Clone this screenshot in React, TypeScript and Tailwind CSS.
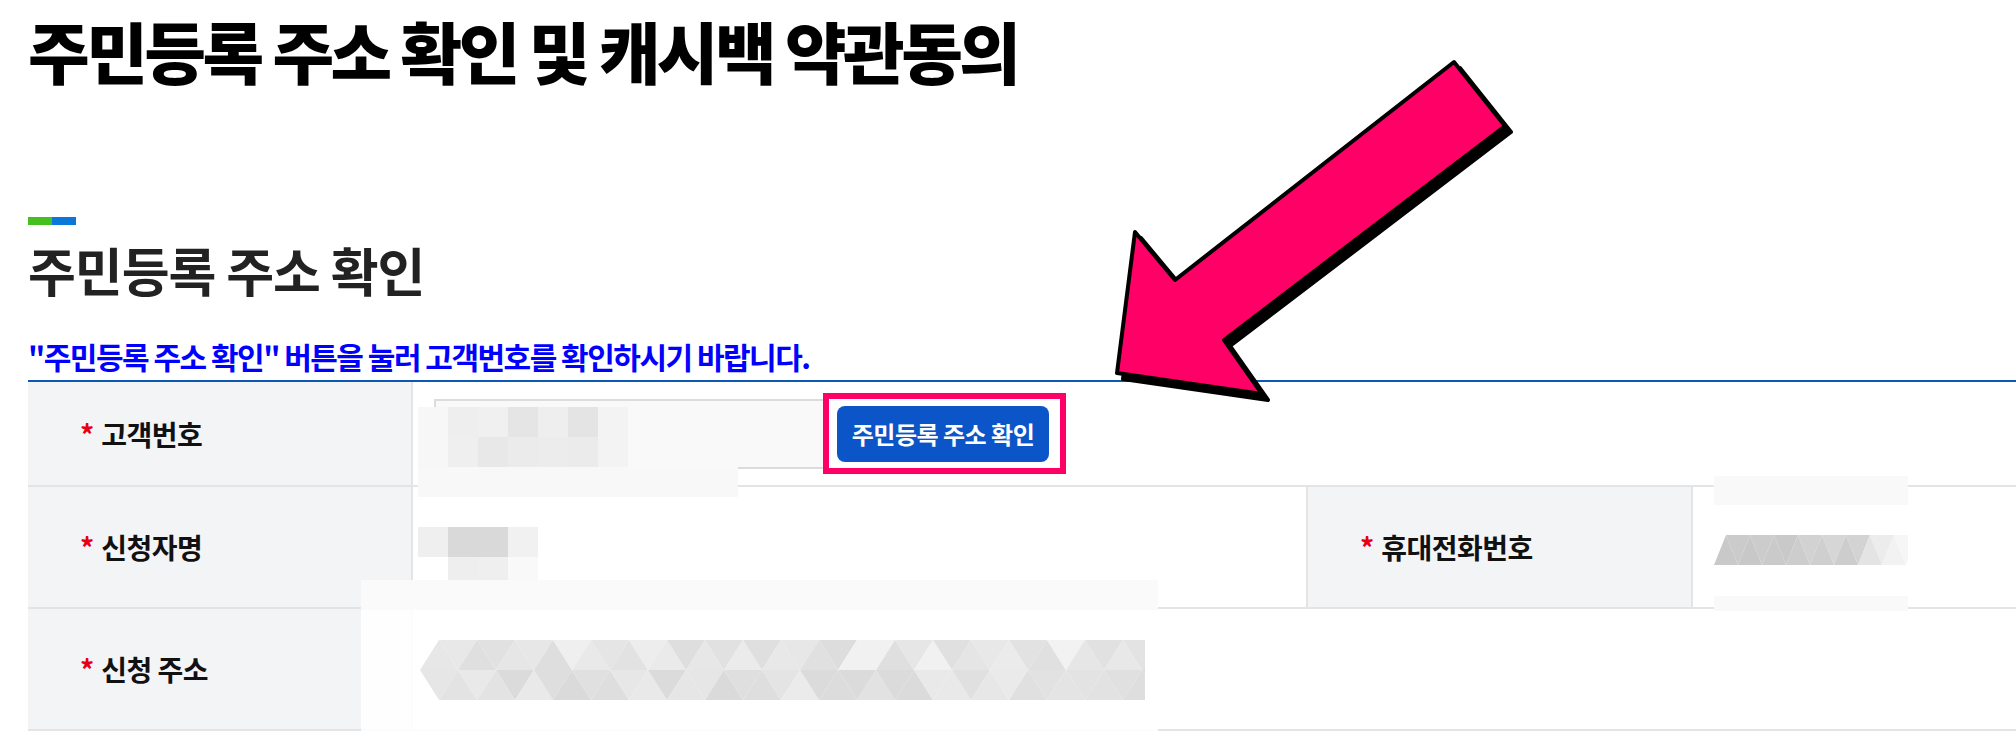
import React from "react";

type Cell = string;

function Mosaic({
  left,
  top,
  cw,
  rows,
  heights,
}: {
  left: number;
  top: number;
  cw: number;
  rows: Cell[][];
  heights: number[];
}) {
  return (
    <div className="absolute flex flex-col" style={{ left, top }}>
      {rows.map((r, i) => (
        <div key={i} className="flex" style={{ height: heights[i] }}>
          {r.map((c, j) => (
            <div key={j} style={{ width: cw, backgroundColor: c }} />
          ))}
        </div>
      ))}
    </div>
  );
}

function TriBand({
  width,
  height,
  tw,
  colors,
}: {
  width: number;
  height: number;
  tw: number;
  colors: string[][];
}) {
  const rh = height / colors.length;
  const polys: React.ReactNode[] = [];
  colors.forEach((row, r) => {
    row.forEach((c, i) => {
      const x = (i * tw) / 2;
      const y0 = r * rh;
      const up = (i + r) % 2 === 0;
      const pts = up
        ? `${x},${y0 + rh} ${x + tw / 2},${y0} ${x + tw},${y0 + rh}`
        : `${x},${y0} ${x + tw / 2},${y0 + rh} ${x + tw},${y0}`;
      polys.push(<polygon key={`${r}-${i}`} points={pts} fill={c} />);
    });
  });
  return (
    <svg width={width} height={height} viewBox={`0 0 ${width} ${height}`} className="block">
      {polys}
    </svg>
  );
}

function seeded(n: number, seed: number, base: number, spread: number) {
  const out: string[] = [];
  let s = seed;
  for (let i = 0; i < n; i++) {
    s = (s * 9301 + 49297) % 233280;
    const v = Math.round(base + (s / 233280) * spread);
    const h = v.toString(16).padStart(2, "0");
    out.push(`#${h}${h}${h}`);
  }
  return out;
}

function Label({ children }: { children: React.ReactNode }) {
  return (
    <div className="flex w-[385px] shrink-0 items-center border-r-2 border-[#e4e4e4] bg-[#f3f4f6] pl-[52px] text-[28px] font-semibold leading-none text-[#111]">
      <span className="mr-[7px] text-[#e60012]">*</span>
      <span className="tracking-[-0.5px]">{children}</span>
    </div>
  );
}

export default function App() {
  const addrTop = seeded(40, 7, 0xdc, 0x16);
  const addrBot = seeded(40, 13, 0xd9, 0x12);
  const phoneRow = [
    "#c9c9c9",
    "#cbcbcb",
    "#c8c8c8",
    "#cccccc",
    "#cacaca",
    "#c9c9c9",
    "#cdcdcd",
    "#d2d2d2",
    "#cfcfcf",
    "#d6d6d6",
    "#cdcdcd",
    "#d3d3d3",
    "#e4e4e4",
    "#ececec",
    "#f2f2f2",
    "#f6f6f6",
  ];

  return (
    <div className="relative h-[742px] w-full overflow-hidden bg-white font-['Noto_Sans_CJK_KR','Noto_Sans',sans-serif]">
      <div className="pl-[28px]">
        <h1 className="pt-[16px] text-[67px] font-black leading-none tracking-[-3.5px] text-black">
          주민등록 주소 확인 및 캐시백 약관동의
        </h1>

        <div className="mt-[134px] flex h-[8px]">
          <div className="w-[24px] bg-[#45c01e]" />
          <div className="w-[24px] bg-[#0a78d8]" />
        </div>

        <h2 className="mt-[19px] text-[52px] font-semibold leading-none tracking-[-1px] text-[#222]">
          주민등록 주소 확인
        </h2>

        <p className="mt-[45px] text-[30px] font-bold leading-none tracking-[-1.5px] text-[#0000ff]">
          "주민등록 주소 확인" 버튼을 눌러 고객번호를 확인하시기 바랍니다.
        </p>

        <div className="mt-[9px] border-t-2 border-[#0b59b5]">
          {/* row 1 */}
          <div className="flex h-[105px] border-b-2 border-[#e4e4e4]">
            <Label>고객번호</Label>
            <div className="flex flex-1 items-center pl-[21px]">
              <div className="h-[70px] w-[395px] border-2 border-[#dcdcdc] bg-[#f9f9f9]" />
              <button className="ml-[8px] h-[56px] w-[212px] rounded-[8px] bg-[#0c55c8] text-[24px] font-semibold leading-none tracking-[-0.5px] text-white">
                주민등록 주소 확인
              </button>
            </div>
          </div>

          {/* row 2 */}
          <div className="flex h-[122px] border-b-2 border-[#e4e4e4]">
            <Label>신청자명</Label>
            <div className="w-[895px] shrink-0 border-r-2 border-[#e4e4e4]" />
            <Label>휴대전화번호</Label>
            <div className="flex-1" />
          </div>

          {/* row 3 */}
          <div className="flex h-[122px] border-b-2 border-[#e4e4e4]">
            <Label>신청 주소</Label>
            <div className="flex-1" />
          </div>
        </div>
      </div>

      {/* privacy mosaics */}
      <Mosaic
        left={418}
        top={407}
        cw={30}
        heights={[30, 30]}
        rows={[
          ["#f7f7f7", "#eeeeee", "#f0f0f0", "#e5e5e5", "#eeeeee", "#e4e4e4", "#f3f3f3"],
          ["#f7f7f7", "#efefef", "#e8e8e8", "#ebebeb", "#ececec", "#ebebeb", "#f3f3f3"],
        ]}
      />
      <div className="absolute left-[418px] top-[467px] h-[30px] w-[320px] bg-[#f8f8f8]" />

      <Mosaic
        left={418}
        top={527}
        cw={30}
        heights={[30, 23]}
        rows={[
          ["#efefef", "#d9d9d9", "#d9d9d9", "#f1f1f1"],
          ["#ffffff", "#eeeeee", "#efefef", "#f9f9f9"],
        ]}
      />

      <div className="absolute left-[1714px] top-[476px] flex w-[194px] flex-col">
        <div className="h-[29px] bg-[#f9f9f9]" />
        <div className="h-[30px]" />
        <div className="h-[30px] overflow-hidden">
          <TriBand width={194} height={30} tw={24} colors={[phoneRow]} />
        </div>
        <div className="h-[31px]" />
        <div className="h-[15px] bg-[#f9f9f9]" />
      </div>

      <div className="absolute left-[361px] top-[580px] flex h-[162px] w-[797px] flex-col bg-white/90">
        <div className="h-[30px] bg-[#fafafa]" />
        <div className="h-[30px]" />
        <div className="ml-[59px] h-[60px] w-[725px] overflow-hidden">
          <TriBand width={725} height={60} tw={38} colors={[addrTop, addrBot]} />
        </div>
      </div>

      {/* highlight box */}
      <div className="absolute left-[823px] top-[393px] h-[81px] w-[243px] border-[6px] border-[#ff0066]" />

      {/* arrow */}
      <svg
        className="pointer-events-none absolute left-0 top-0"
        width={2016}
        height={742}
        viewBox="0 0 2016 742"
      >
        <polygon
          transform="translate(6,6)"
          points="1117,373 1135,232 1175,280 1454,62 1505,126 1224,340 1262,394"
          fill="#000"
          stroke="#000"
          strokeWidth={4}
          strokeLinejoin="round"
        />
        <polygon
          points="1117,373 1135,232 1175,280 1454,62 1505,126 1224,340 1262,394"
          fill="#ff0066"
          stroke="#000"
          strokeWidth={4}
          strokeLinejoin="round"
        />
      </svg>
    </div>
  );
}
